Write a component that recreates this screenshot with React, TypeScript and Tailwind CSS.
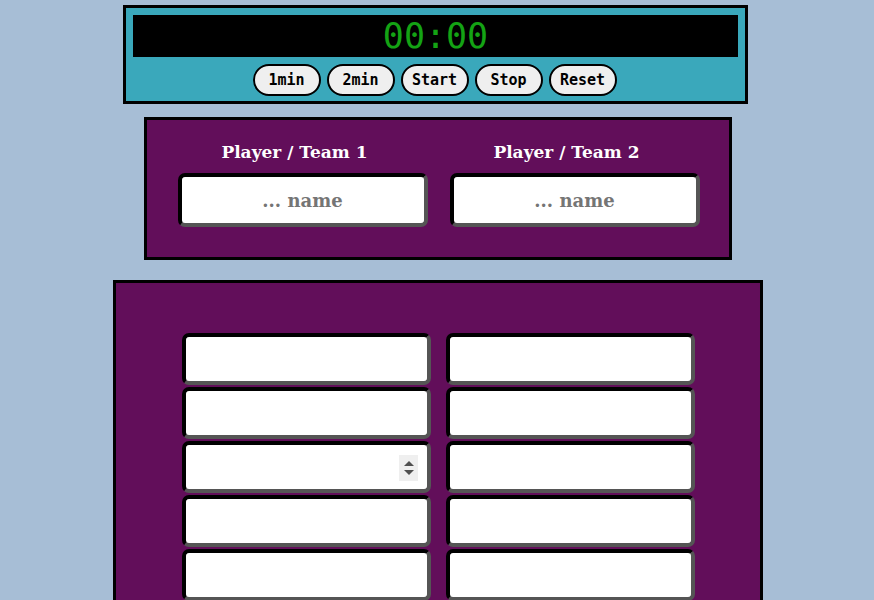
import React from "react";

const serif = { fontFamily: '"DejaVu Serif", "Liberation Serif", serif' };
const mono = { fontFamily: '"DejaVu Sans Mono", "Liberation Mono", monospace' };

function Btn({ label }: { label: string }) {
  return (
    <button
      className="h-[32px] w-[68px] rounded-full border-2 border-black bg-[#efefef] text-[15px] font-bold text-black"
      style={mono}
    >
      {label}
    </button>
  );
}

function Cell({ spinner }: { spinner?: boolean }) {
  return (
    <div className="relative h-[52px] w-[249px]">
      <input
        type="text"
        className="h-full w-full rounded-[7px] border-4 border-t-black border-l-black border-b-[#555555] border-r-[#555555] bg-white outline-none"
      />
      {spinner && (
        <div className="absolute right-[13px] top-[14px] flex h-[26px] w-[19px] flex-col items-center justify-center gap-[4px] bg-[#efefef]">
          <svg width="10" height="5" viewBox="0 0 10 5">
            <path d="M0 5 L5 0 L10 5 Z" fill="#505050" />
          </svg>
          <svg width="10" height="5" viewBox="0 0 10 5">
            <path d="M0 0 L5 5 L10 0 Z" fill="#505050" />
          </svg>
        </div>
      )}
    </div>
  );
}

export default function App() {
  const rows = Array.from({ length: 8 });
  return (
    <div className="min-h-screen bg-[#a7bed6] pt-[5px]">
      {/* Timer */}
      <div className="ml-[123px] w-[625px] border-[3px] border-black bg-[#3aa8bb] px-[7px] pb-[5px] pt-[7px]">
        <div
          className="flex h-[42px] items-center justify-center bg-black text-[35px] leading-none text-[#14a314]"
          style={mono}
        >
          00:00
        </div>
        <div className="mt-[7px] flex justify-center gap-[6px] pr-[2px]">
          <Btn label="1min" />
          <Btn label="2min" />
          <Btn label="Start" />
          <Btn label="Stop" />
          <Btn label="Reset" />
        </div>
      </div>

      {/* Players */}
      <div className="ml-[144px] mt-[13px] h-[143px] w-[588px] border-[3px] border-black bg-[#620e5a]">
        <div className="flex justify-center gap-[22px] pl-[1px] pt-[20px]">
          {[1, 2].map((n) => (
            <div key={n} className="flex w-[250px] flex-col items-center">
              <div
                className="pr-[16px] text-[17px] font-bold leading-[24px] text-white"
                style={serif}
              >
                Player / Team {n}
              </div>
              <input
                type="text"
                placeholder="... name"
                className="mt-[9px] h-[54px] w-[250px] rounded-[7px] border-4 border-t-black border-l-black border-b-[#555555] border-r-[#555555] bg-white text-center text-[18px] font-bold text-black outline-none placeholder:text-[#757575]"
                style={serif}
              />
            </div>
          ))}
        </div>
      </div>

      {/* Grid */}
      <div className="ml-[113px] mt-[20px] w-[650px] border-[3px] border-black bg-[#620e5a] pb-[50px] pt-[50px]">
        <div className="ml-[66px] grid w-[513px] grid-cols-[249px_249px] gap-x-[15px] gap-y-[2px]">
          {rows.map((_, i) => (
            <React.Fragment key={i}>
              <Cell spinner={i === 2} />
              <Cell />
            </React.Fragment>
          ))}
        </div>
      </div>
    </div>
  );
}
